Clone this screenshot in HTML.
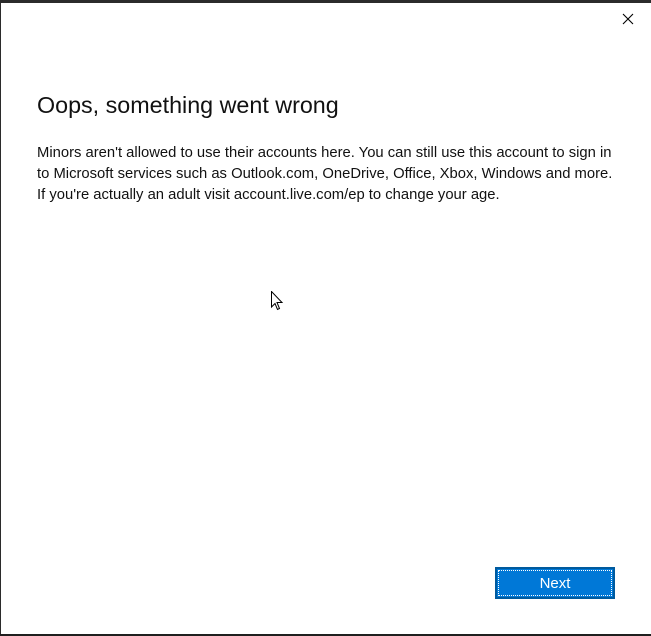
<!DOCTYPE html>
<html><head><style>
html,body{margin:0;padding:0;}
body{width:651px;height:636px;background:#fff;position:relative;overflow:hidden;font-family:"Segoe UI","Liberation Sans",sans-serif;color:#000;}
.top{position:absolute;left:0;top:0;width:651px;height:3px;background:#2b2b2b;}
.left{position:absolute;left:0;top:0;width:1px;height:636px;background:#2b2b2b;}
.bot{position:absolute;left:0;top:634px;width:651px;height:2px;background:#1f1f1f;}
.x{position:absolute;left:622px;top:13px;width:12px;height:12px;}
h1{position:absolute;left:37px;top:90px;margin:0;font-weight:300;font-size:23.3px;line-height:30px;color:#111;white-space:nowrap;}
p{position:absolute;left:37px;top:143px;margin:0;font-size:14.8px;line-height:21px;white-space:nowrap;color:#111;}
.btn{position:absolute;left:495px;top:567px;width:116px;height:28px;background:#0078d7;border:2px solid #005a9e;box-sizing:content-box;}
.btn .f{position:absolute;left:1px;top:1px;right:1px;bottom:1px;border:1px dotted #fff;}
.btn span{position:absolute;left:0;right:0;top:6px;text-align:center;color:#fff;font-size:15px;}
</style></head><body>
<div class="top"></div><div class="left"></div><div class="bot"></div>
<svg class="x" viewBox="0 0 12 12"><path d="M1 1L11 11M11 1L1 11" stroke="#000" stroke-width="1.1"/></svg>
<h1>Oops, something went wrong</h1>
<p>Minors aren't allowed to use their accounts here. You can still use this account to sign in<br>to Microsoft services such as Outlook.com, OneDrive, Office, Xbox, Windows and more.<br>If you're actually an adult visit account.live.com/ep to change your age.</p>
<svg style="position:absolute;left:271px;top:291px" width="13" height="20" viewBox="0 0 13 20"><path d="M0.5 0.5L0.5 16L4 12.5L6.5 18.5L8.5 17.5L6 11.5L11 11.5Z" fill="#fff" stroke="#000" stroke-width="1"/></svg>
<div class="btn"><div class="f"></div><span>Next</span></div>
</body></html>
